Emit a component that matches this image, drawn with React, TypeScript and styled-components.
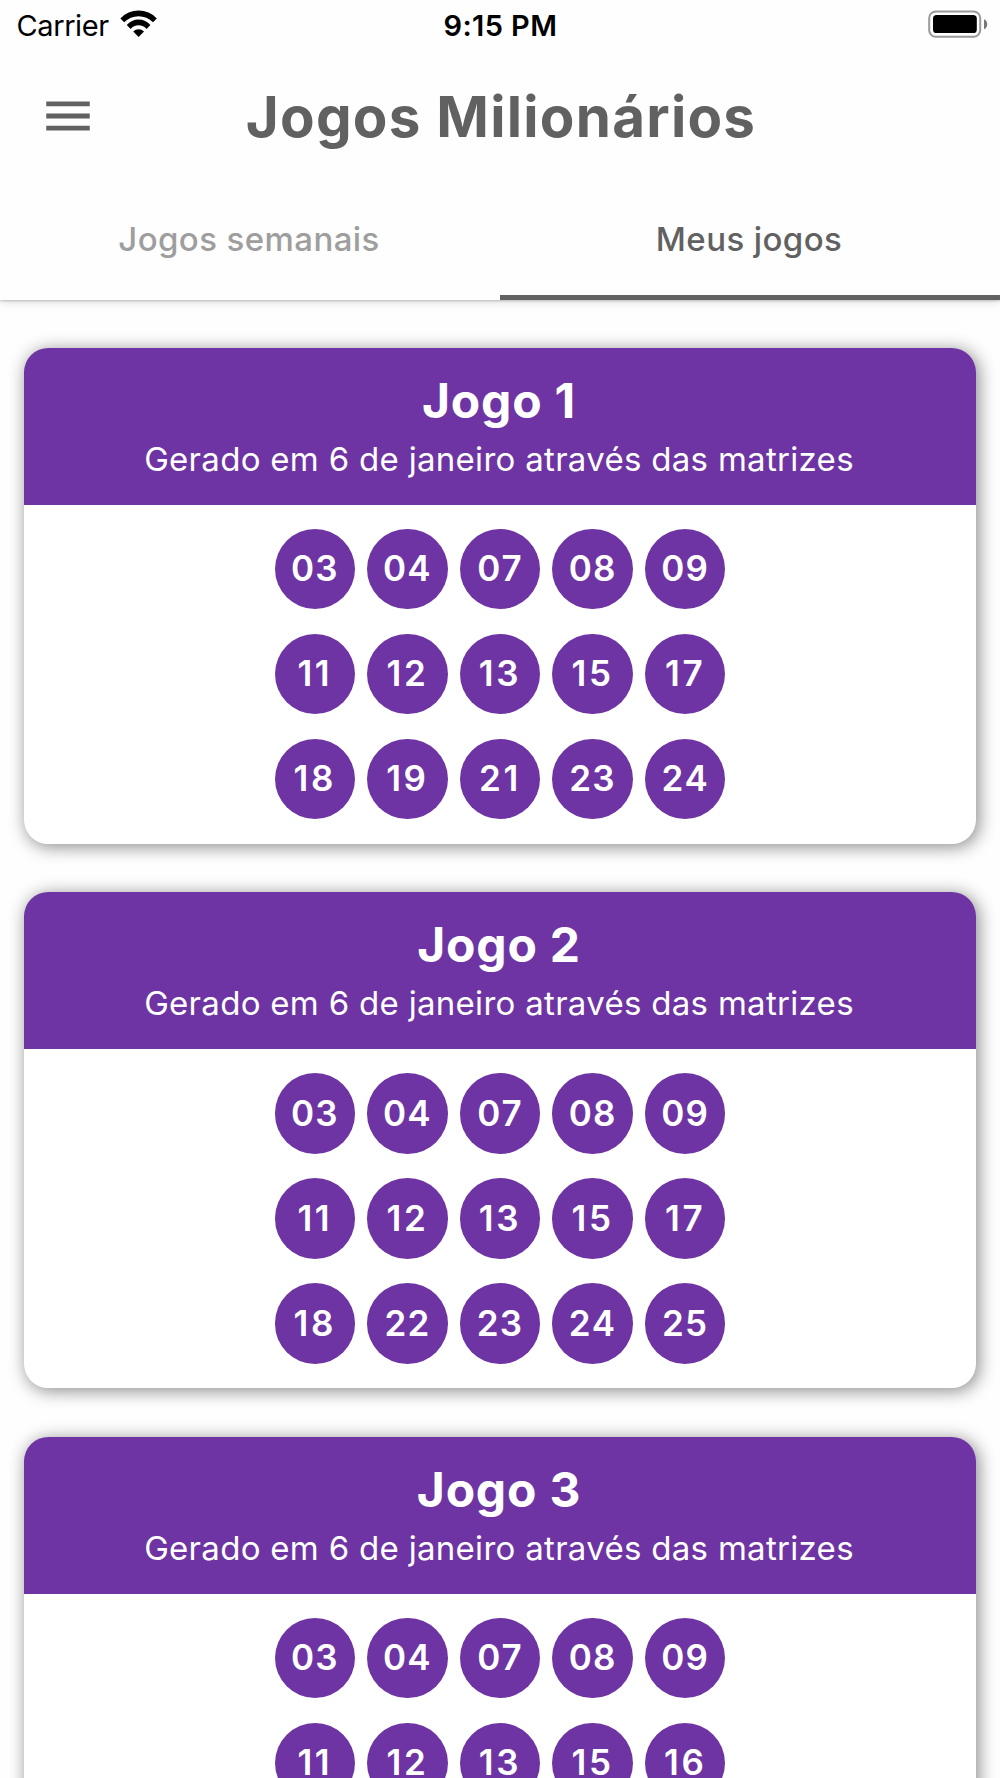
import React from "react";
import styled, { createGlobalStyle } from "styled-components";

const GlobalStyle = createGlobalStyle`
  * { box-sizing: border-box; }
  html, body { margin: 0; padding: 0; background: #fefefe; }
  body { font-family: Inter, "Liberation Sans", sans-serif; overflow: hidden; }
`;

const purple = "#6e34a3";
const gray = "#616161";

const Screen = styled.main`
  width: 1000px;
  height: 1778px;
  overflow: hidden;
  background: #fefefe;
`;

const TopArea = styled.header`
  background: #fefefe;
  height: 299.6px;
  box-shadow: 0 1px 2px rgba(0, 0, 0, 0.2), 0 2px 9px rgba(0, 0, 0, 0.14);
`;

const StatusBar = styled.div`
  height: 48.3px;
  padding: 3px 12px 0 16.5px;
  display: grid;
  grid-template-columns: 427px 1fr auto;
  align-items: center;
  color: #000;
`;

const Carrier = styled.div`
  display: flex;
  align-items: center;
  gap: 11.5px;
  font-size: 29px;
  line-height: 46px;
  letter-spacing: -0.4px;
`;

const Clock = styled.time`
  font-size: 29px;
  line-height: 46px;
  font-weight: 600;
  letter-spacing: 0.4px;
`;

const WifiIcon = styled.svg`
  width: 37px;
  height: 28px;
  margin-top: -4px;
`;

const BatteryIcon = styled.svg`
  width: 60px;
  height: 28px;
  margin-top: -4px;
`;

const AppBar = styled.div`
  height: 135.3px;
  padding: 0 38.6px;
  display: grid;
  grid-template-columns: 58px 1fr 58px;
  align-items: center;
`;

const MenuButton = styled.button`
  width: 58px;
  height: 58px;
  padding: 0;
  border: 0;
  background: none;
  color: ${gray};
  svg { display: block; width: 58px; height: 58px; }
`;

const Title = styled.h1`
  margin: 0;
  padding: 2px 0 0 2px;
  text-align: center;
  color: ${gray};
  font-size: 56.5px;
  line-height: 68px;
  font-weight: 700;
  letter-spacing: 1.25px;
`;

const Tabs = styled.nav`
  height: 116px;
  display: grid;
  grid-template-columns: 1fr 1fr;
`;

const Tab = styled.button<{ $active?: boolean }>`
  border: 0;
  padding: 0 2px 1px 0;
  background: none;
  border-bottom: 5px solid ${(p) => (p.$active ? gray : "transparent")};
  color: ${(p) => (p.$active ? gray : "#9e9e9e")};
  font-family: inherit;
  font-size: 33px;
  line-height: 40px;
  font-weight: 500;
  letter-spacing: 0.4px;
`;

const GameList = styled.section`
  display: flex;
  flex-direction: column;
  gap: 48.4px;
  padding: 48.3px 24.1px;
`;

const Card = styled.article`
  height: 496px;
  border-radius: 24.2px;
  background: #fff;
  box-shadow: 2.4px 2.4px 17px rgba(0, 0, 0, 0.45);
`;

const CardHeader = styled.div`
  height: 157.1px;
  padding: 24.2px 2px 0 0;
  border-radius: 24.2px 24.2px 0 0;
  background: ${purple};
  color: #fff;
  text-align: center;
`;

const CardTitle = styled.h2`
  margin: 0;
  font-size: 48px;
  line-height: 58px;
  font-weight: 700;
  letter-spacing: 0.8px;
`;

const CardSubtitle = styled.p`
  margin: 0;
  font-size: 33px;
  line-height: 58px;
  letter-spacing: 0.3px;
`;

const Balls = styled.div`
  display: grid;
  grid-template-columns: repeat(5, 80.6px);
  justify-content: center;
  gap: 24.4px 12px;
  padding-top: 23.8px;
`;

const Ball = styled.span<{ $narrow: boolean }>`
  height: 80.6px;
  padding-bottom: 1.5px;
  border-radius: 50%;
  background: ${purple};
  color: #fff;
  display: flex;
  align-items: center;
  justify-content: center;
  font-size: 35px;
  line-height: 42px;
  font-weight: 600;
  font-kerning: none;
  letter-spacing: ${(p) => (p.$narrow ? "2.6px" : "1.2px")};
`;

const games = [
  ["03", "04", "07", "08", "09", "11", "12", "13", "15", "17", "18", "19", "21", "23", "24"],
  ["03", "04", "07", "08", "09", "11", "12", "13", "15", "17", "18", "22", "23", "24", "25"],
  ["03", "04", "07", "08", "09", "11", "12", "13", "15", "16"],
];

export default function App() {
  return (
    <Screen>
      <GlobalStyle />
      <TopArea>
        <StatusBar>
          <Carrier>
            Carrier
            <WifiIcon viewBox="120 10 37 28" fill="#000">
              <path d="M120.4 18.4A25 25 0 0 1 156.8 18.4L153 22.3A20.2 20.2 0 0 0 124.2 22.3Z" />
              <path d="M126.8 25.1A15.2 15.2 0 0 1 150.4 25.1L146.6 28.9A10.6 10.6 0 0 0 130.6 28.9Z" />
              <path d="M133.2 31.6A7.4 7.4 0 0 1 144 31.6L138.6 37Z" />
            </WifiIcon>
          </Carrier>
          <Clock>9:15 PM</Clock>
          <BatteryIcon viewBox="928 10 60 28">
            <rect x="929.2" y="11.4" width="51" height="25.4" rx="6.6" fill="none" stroke="#999" strokeWidth="2" />
            <rect x="933" y="15" width="43.8" height="18" rx="3.6" fill="#000" />
            <path d="M984 19.2Q987.2 20.6 987.2 24.2T984 29.2Z" fill="#777" />
          </BatteryIcon>
        </StatusBar>
        <AppBar>
          <MenuButton aria-label="Menu">
            <svg viewBox="0 0 24 24" fill="currentColor">
              <path d="M3 18h18v-2H3v2zm0-5h18v-2H3v2zm0-7v2h18V6H3z" />
            </svg>
          </MenuButton>
          <Title>Jogos Milionários</Title>
        </AppBar>
        <Tabs>
          <Tab>Jogos semanais</Tab>
          <Tab $active>Meus jogos</Tab>
        </Tabs>
      </TopArea>
      <GameList>
        {games.map((numbers, i) => (
          <Card key={i}>
            <CardHeader>
              <CardTitle>Jogo {i + 1}</CardTitle>
              <CardSubtitle>Gerado em 6 de janeiro através das matrizes</CardSubtitle>
            </CardHeader>
            <Balls>
              {numbers.map((n) => (
                <Ball key={n} $narrow={n.includes("1")}>{n}</Ball>
              ))}
            </Balls>
          </Card>
        ))}
      </GameList>
    </Screen>
  );
}
